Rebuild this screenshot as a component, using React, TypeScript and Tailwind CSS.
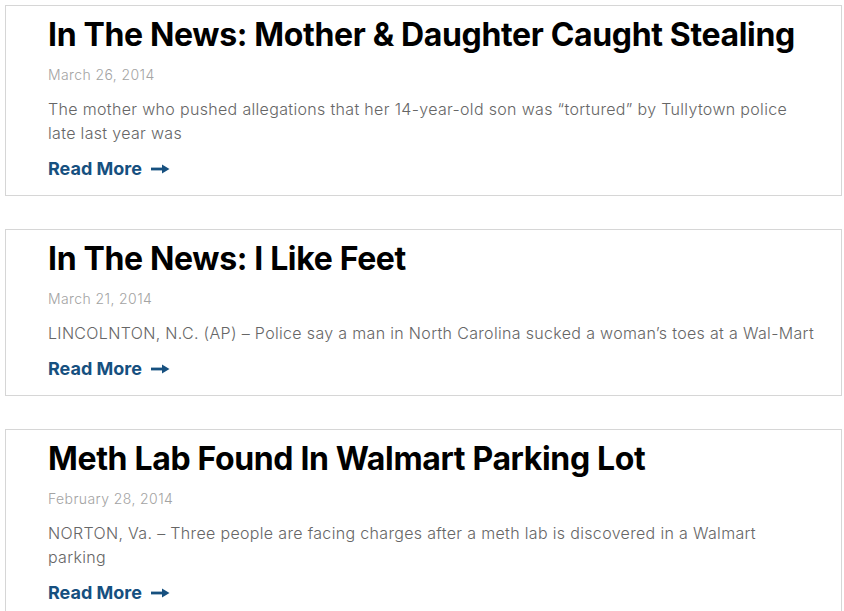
const posts = [
  {
    title: 'In The News: Mother & Daughter Caught Stealing',
    date: 'March 26, 2014',
    excerpt:
      'The mother who pushed allegations that her 14-year-old son was \u201ctortured\u201d by Tullytown police late last year was',
  },
  {
    title: 'In The News: I Like Feet',
    date: 'March 21, 2014',
    excerpt:
      'LINCOLNTON, N.C. (AP) \u2013 Police say a man in North Carolina sucked a woman\u2019s toes at a Wal-Mart',
  },
  {
    title: 'Meth Lab Found In Walmart Parking Lot',
    date: 'February 28, 2014',
    excerpt:
      'NORTON, Va. \u2013 Three people are facing charges after a meth lab is discovered in a Walmart parking',
  },
];

function LongArrow() {
  return (
    <svg width="19" height="10" viewBox="0 0 19 10" className="shrink-0">
      <rect x="0" y="3.6" width="12" height="2.8" fill="currentColor" />
      <path d="M11 0.5 L18.5 5 L11 9.5 Z" fill="currentColor" />
    </svg>
  );
}

function PostCard({ post }) {
  return (
    <article className="border border-[#d6d6d6] bg-white pl-[42px] pr-[25px] pt-[9px] pb-[14px]">
      <h2 className="text-[32px] leading-[40px] font-bold text-black tracking-[-0.35px]">
        {post.title}
      </h2>
      <p className="mt-[10px] text-[14px] leading-[20px] font-light tracking-[0.4px] text-[#a3a3a3]">
        {post.date}
      </p>
      <p className="mt-[12px] text-[16px] leading-[24px] font-light tracking-[0.33px] text-[#666666]">
        {post.excerpt}
      </p>
      <a
        href="#"
        className="mt-[12px] inline-flex items-center gap-[9px] text-[18px] leading-[24px] font-bold text-[#16507f]"
      >
        Read More
        <LongArrow />
      </a>
    </article>
  );
}

export default function App() {
  return (
    <div
      className="min-h-screen bg-white p-[5px] pr-[2px]"
      style={{ fontFamily: 'Inter, "Open Sans", sans-serif' }}
    >
      <div className="flex flex-col gap-[33px]">
        {posts.map((post) => (
          <PostCard key={post.title} post={post} />
        ))}
      </div>
    </div>
  );
}
